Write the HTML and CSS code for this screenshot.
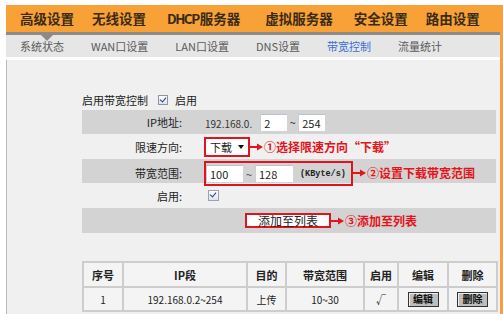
FILE: index.html
```html
<!DOCTYPE html>
<html lang="zh">
<head>
<meta charset="utf-8">
<title>带宽控制</title>
<link rel="stylesheet" href="styles.css">
</head>
<body>
<div class="frame">
  <nav class="topnav">
    <span class="top-item current">高级设置</span>
    <span class="top-item">无线设置</span>
    <span class="top-item"><span class="latin">DHCP</span>服务器</span>
    <span class="top-item">虚拟服务器</span>
    <span class="top-item">安全设置</span>
    <span class="top-item">路由设置</span>
  </nav>
  <div class="subnav">
    <span class="sub-item">系统状态</span>
    <span class="sub-item">WAN口设置</span>
    <span class="sub-item">LAN口设置</span>
    <span class="sub-item">DNS设置</span>
    <span class="sub-item active">带宽控制</span>
    <span class="sub-item">流量统计</span>
  </div>
  <main class="content">
    <div class="enable-line">
      <span>启用带宽控制</span>
      <span class="check"></span>
      <span>启用</span>
    </div>
    <div class="form">
      <div class="row alt">
        <div class="label">IP地址:</div>
        <div class="value">
          <span class="ip-prefix">192.168.0.</span>
          <span class="input w27">2</span>
          <span class="tilde">~</span>
          <span class="input w27">254</span>
        </div>
      </div>
      <div class="row">
        <div class="label">限速方向:</div>
        <div class="value">
          <span class="redbox">
            <span class="select">下载 <span class="caret"></span></span>
          </span>
          <span class="note"><svg class="arrow" width="13" height="8" viewBox="0 0 13 8"><line x1="0" y1="4" x2="8" y2="4" stroke="#e3141b" stroke-width="2"/><polygon points="7,0.5 13,4 7,7.5" fill="#e3141b"/></svg>①选择限速方向“下载”</span>
        </div>
      </div>
      <div class="row alt">
        <div class="label">带宽范围:</div>
        <div class="value">
          <span class="redbox range">
            <span class="input w37">100</span>
            <span class="tilde">~</span>
            <span class="input w38">128</span>
            <span class="unit">(KByte/s)</span>
          </span>
          <span class="note"><svg class="arrow" width="13" height="8" viewBox="0 0 13 8"><line x1="0" y1="4" x2="8" y2="4" stroke="#e3141b" stroke-width="2"/><polygon points="7,0.5 13,4 7,7.5" fill="#e3141b"/></svg>②设置下载带宽范围</span>
        </div>
      </div>
      <div class="row">
        <div class="label">启用:</div>
        <div class="value">
          <span class="check small"></span>
        </div>
      </div>
      <div class="row alt">
        <div class="label"></div>
        <div class="value">
          <span class="redbox addbtn">添加至列表</span>
          <span class="note"><svg class="arrow" width="13" height="8" viewBox="0 0 13 8"><line x1="0" y1="4" x2="8" y2="4" stroke="#e3141b" stroke-width="2"/><polygon points="7,0.5 13,4 7,7.5" fill="#e3141b"/></svg>③添加至列表</span>
        </div>
      </div>
    </div>
    <table class="list">
      <colgroup>
        <col class="c1"><col class="c2"><col class="c3"><col class="c4"><col class="c5"><col class="c6"><col class="c7">
      </colgroup>
      <thead>
        <tr><th>序号</th><th>IP段</th><th>目的</th><th>带宽范围</th><th>启用</th><th>编辑</th><th>删除</th></tr>
      </thead>
      <tbody>
        <tr>
          <td>1</td>
          <td>192.168.0.2~254</td>
          <td>上传</td>
          <td>10~30</td>
          <td>√</td>
          <td><span class="tbtn">编辑</span></td>
          <td><span class="tbtn">删除</span></td>
        </tr>
      </tbody>
    </table>
  </main>
</div>
</body>
</html>
```

FILE: styles.css
```css
html, body {
  margin: 0;
  padding: 0;
  background: #ffffff;
}

body {
  width: 503px;
  height: 314px;
  overflow: hidden;
  font-family: "Noto Sans CJK SC", "DejaVu Sans", sans-serif;
  color: #222;
}

.frame {
  box-sizing: border-box;
  width: 497px;
  margin: 5px 0 0 6px;
  border-right: 3px solid #f4a042;
}

.topnav {
  position: relative;
  height: 27px;
  background: #f7a136;
  border-bottom: 3px solid #8e8b87;
  display: flex;
  align-items: center;
  padding-left: 14px;
  gap: 18px;
  font-size: 13.5px;
  font-weight: bold;
  color: #3a2a16;
  line-height: 1;
}

.top-item {
  position: relative;
  white-space: nowrap;
}

.top-item .latin {
  letter-spacing: -1.5px;
  margin-right: 1px;
}

.top-item:nth-child(3) { margin-left: 3px; }
.top-item:nth-child(4) { margin-left: 7px; }
.top-item:nth-child(5) { margin-left: 3px; }
.top-item:nth-child(6) { margin-left: 0; }

.top-item.current::after {
  content: "";
  position: absolute;
  left: 21px;
  top: 23px;
  border-left: 6px solid transparent;
  border-right: 6px solid transparent;
  border-top: 6px solid #8e8b87;
}

.subnav {
  height: 22px;
  background: #e6e6e6;
  border-bottom: 3px solid #ffffff;
  display: flex;
  align-items: center;
  padding-left: 14px;
  gap: 27px;
  font-size: 11px;
  color: #5a5a5a;
  line-height: 1;
}

.sub-item {
  white-space: nowrap;
}

.sub-item.active {
  color: #3b6fd8;
}

.content {
  height: 254px;
  box-sizing: border-box;
  background: #f0f0f0;
  border-left: 1px solid #b8b8b8;
  padding: 30px 4px 0 75px;
}

.enable-line {
  height: 20px;
  display: flex;
  align-items: center;
  font-size: 11px;
  color: #222;
  gap: 0;
}

.enable-line .check {
  margin: 0 7px 0 10px;
}

.check {
  display: inline-block;
  box-sizing: border-box;
  width: 10px;
  height: 10px;
  border: 1px solid #8a94a6;
  background: linear-gradient(#ffffff, #dfe3ea);
  position: relative;
}

.check::after {
  content: "";
  position: absolute;
  left: 2px;
  top: 0px;
  width: 3px;
  height: 5px;
  border-right: 1.5px solid #2a3f8a;
  border-bottom: 1.5px solid #2a3f8a;
  transform: rotate(40deg);
}

.form {
  display: flex;
  flex-direction: column;
}

.row {
  display: grid;
  grid-template-columns: 122px 1fr;
  align-items: center;
  height: 25px;
  font-size: 11px;
}

.row:nth-child(1), .row:nth-child(3) {
  height: 24px;
}

.row.alt {
  background: #d3d3d3;
}

.label {
  text-align: right;
  padding-right: 22px;
  color: #222;
  white-space: nowrap;
}

.value {
  display: flex;
  align-items: center;
  white-space: nowrap;
}

.ip-prefix {
  font-size: 10px;
  margin-left: 1px;
  margin-right: 8px;
  margin-top: 3px;
  color: #333;
}

.input {
  display: inline-flex;
  align-items: center;
  box-sizing: border-box;
  height: 17px;
  padding-left: 3px;
  background: #ffffff;
  border-top: 1px solid #b9c3d2;
  border-left: 1px solid #c9cfd8;
  font-size: 11px;
  color: #222;
}

.w27 { width: 27px; }
.w37 { width: 37px; }
.w38 { width: 38px; }

.tilde {
  width: 11px;
  text-align: center;
  font-size: 11px;
}

.redbox {
  box-sizing: border-box;
  border: 2px solid #e0141c;
  display: inline-flex;
  align-items: center;
}

.select {
  display: inline-flex;
  align-items: center;
  box-sizing: border-box;
  width: 42px;
  height: 16px;
  padding-left: 4px;
  background: #ffffff;
  font-size: 11px;
  gap: 6px;
}

.caret {
  display: inline-block;
  border-left: 3px solid transparent;
  border-right: 3px solid transparent;
  border-top: 4px solid #111;
  margin-top: 1px;
}

.range {
  width: 149px;
  height: 25px;
  padding-left: 0;
  margin-top: 2px;
}

.range .tilde {
  width: 12px;
  color: #444;
}

.unit {
  font-family: "Liberation Mono", monospace;
  font-size: 8.5px;
  font-weight: bold;
  margin-left: 7px;
  color: #222;
}

.check.small {
  margin-left: 4px;
  width: 11px;
  height: 11px;
  border-color: #9aa2b2;
}

.addbtn {
  margin-left: 41px;
  width: 86px;
  height: 15px;
  justify-content: center;
  background: #ffffff;
  font-size: 12px;
  color: #222;
  line-height: 1;
}

.note {
  display: inline-flex;
  align-items: center;
  font-size: 12px;
  font-weight: bold;
  color: #e3141b;
  line-height: 1;
}

.arrow {
  margin: 0 1px 0 0;
}

.list {
  margin-top: 28px;
  width: 414px;
  border-collapse: collapse;
  table-layout: fixed;
  background: #f4f4f4;
  font-size: 10px;
}

.c1 { width: 40px; }
.c2 { width: 124px; }
.c3 { width: 39px; }
.c4 { width: 78px; }
.c5 { width: 34px; }
.c6 { width: 50px; }
.c7 { width: 49px; }

.list th, .list td {
  border: 2px solid #cdcdcd;
  text-align: center;
  padding: 0;
  color: #222;
}

.list th {
  height: 23px;
  font-size: 11px;
  font-weight: bold;
}

.list td {
  height: 22px;
  font-family: "Noto Sans CJK SC", sans-serif;
}

.tbtn {
  display: inline-block;
  box-sizing: border-box;
  width: 31px;
  height: 15px;
  line-height: 12px;
  border: 1px solid #333;
  background: #bdbdbd;
  font-size: 10px;
  font-weight: bold;
  color: #111;
  box-shadow: inset 1px 1px 0 #eee;
}
```
